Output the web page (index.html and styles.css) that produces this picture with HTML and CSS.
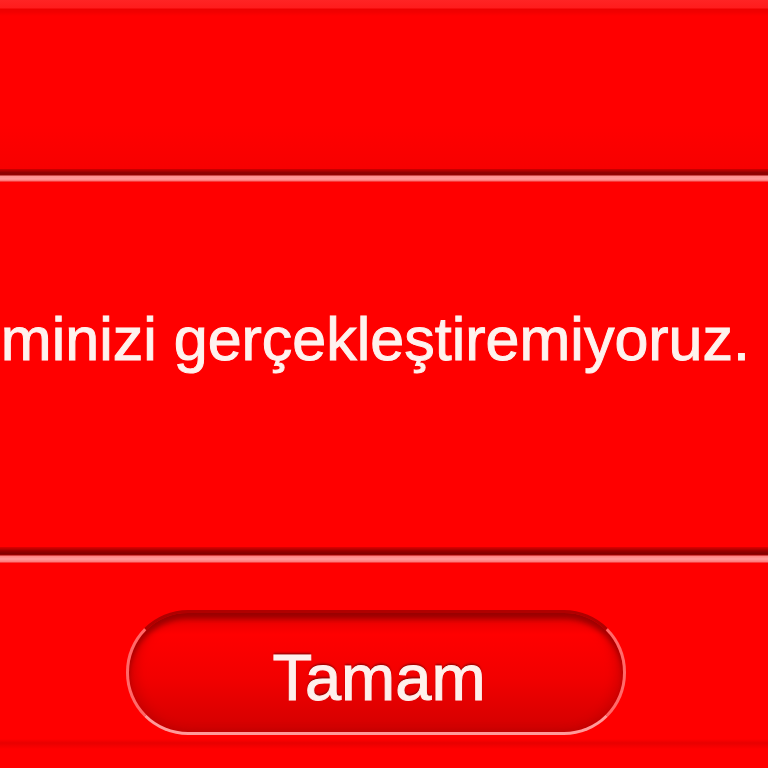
FILE: index.html
```html
<!DOCTYPE html>
<html>
<head>
<meta charset="UTF-8">
<title>Uyarı</title>
<link rel="stylesheet" href="styles.css">
</head>
<body>

<div class="dialog">
	<div class="head"></div>
	<div class="sep"></div>

	<div class="msg">
		<p class="msgText">İşleminizi gerçekleştiremiyoruz.</p>
	</div>

	<div class="sep sepLow"></div>

	<div class="foot">
		<button type="button" class="btn">Tamam</button>
	</div>
</div>

</body>
</html>
```

FILE: styles.css
```css
* {box-sizing: border-box;}
html, body {margin: 0; padding: 0;}
body {background: #ff0000; font-family: "Liberation Sans", Arial, sans-serif; overflow: hidden;}

.dialog {width: 768px; height: 768px; display: flex; flex-direction: column; overflow: hidden;}

.head {height: 169px; background: linear-gradient(#ff2424 0, #ff1c1c 8px, #ee0000 9px, #f20000 12px, #ff0000 16px, #ff0000 125px, #f70000 169px);}

.sep {height: 13px; background: linear-gradient(#d00000 0, #8a0000 4px, #960000 6px, #ff8c8c 7px, #ff9a9a 10px, #ff7070 12px, #f00000 13px);}
.sepLow {height: 16px; background: linear-gradient(#e00000 0, #9a0000 4px, #800000 7px, #a80000 8px, #ff8080 9px, #ff9c9c 12px, #ff7878 15px, #f40000 16px);}

.msg {height: 365px; display: flex; justify-content: flex-end; padding: 122px 18px 0 0;}
.msgText {margin: 0; white-space: nowrap; font-size: 61px; line-height: 70px; color: #fff2ee; -webkit-text-stroke: 1px #fff2ee;}

.foot {flex: 1; padding: 47px 0 0 126px; background: linear-gradient(#ff0000 0, #ff0000 176px, #e80000 180px, #ff0000 186px);}

.btn {width: 500px; height: 125px; border-radius: 62px; border: 3px solid; border-color: #b00000 #ff6a6a #ff9a9a #ff6a6a;
	background: linear-gradient(#e00000 0, #ff0000 18%, #f20000 55%, #d20000 100%);
	box-shadow: inset 0 6px 5px rgba(110, 0, 0, 0.55), inset 8px 0 10px rgba(150, 0, 0, 0.25), inset -8px 0 10px rgba(150, 0, 0, 0.25);
	font-family: "Liberation Sans", Arial, sans-serif; font-size: 65px; line-height: 65px; color: #fff0ec; padding: 10px 0 0 6px;
	-webkit-text-stroke: 1px #fff0ec; text-shadow: 0 -2px 2px rgba(90, 0, 0, 0.6);}
```
